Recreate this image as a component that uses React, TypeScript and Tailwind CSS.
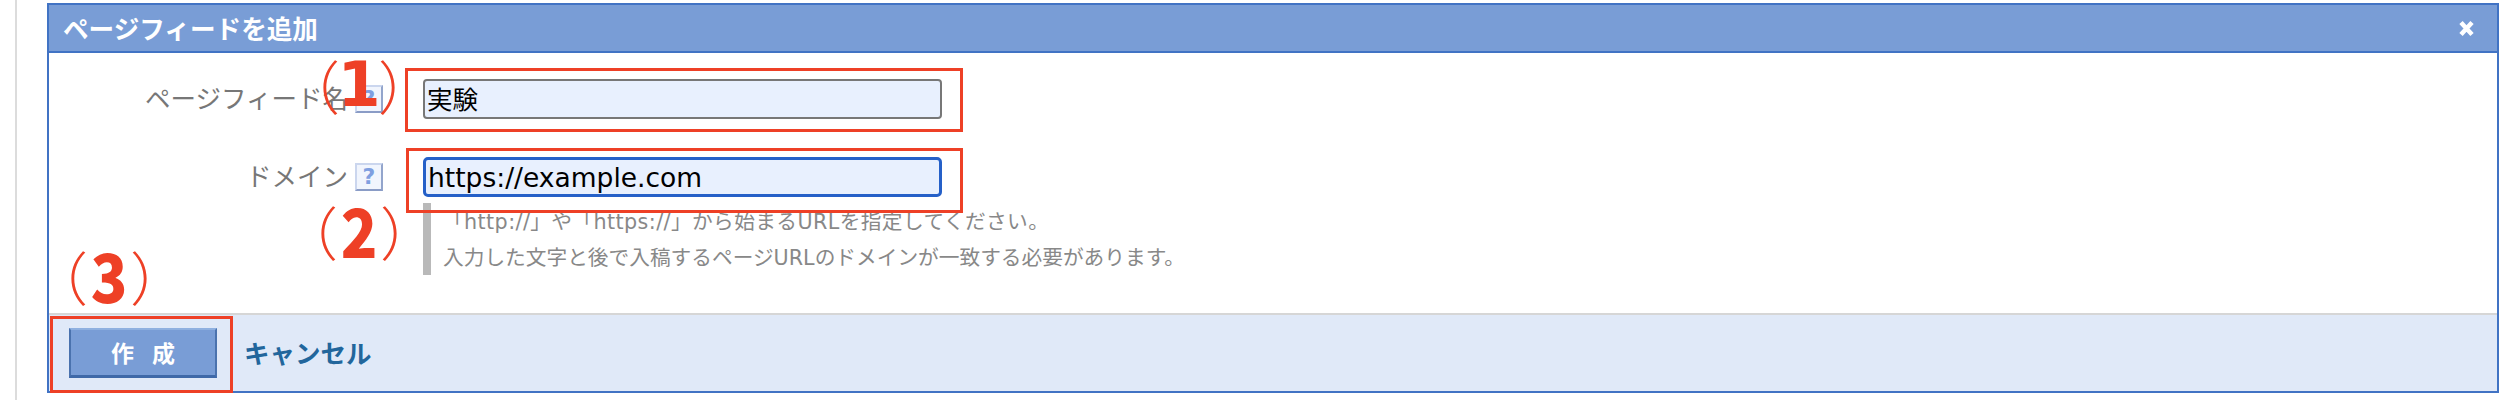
import { useState } from 'react';

const FONT = "font-['DejaVu_Sans','Noto_Sans_CJK_JP',sans-serif]";
const JP = "font-['Noto_Sans_CJK_JP',sans-serif]";

function HelpIcon() {
  return (
    <span className="flex h-[28px] w-[28px] items-center justify-center border-2 border-t-[#cbd6ee] border-l-[#cbd6ee] border-r-[#93a5cc] border-b-[#8a9cc6] bg-[#f1f5fd] font-['DejaVu_Sans',sans-serif] text-[22px] leading-none font-bold text-[#7f9fe0]">
      ?
    </span>
  );
}

function Callout({ n, className, digitClass }: { n: string; className: string; digitClass: string }) {
  return (
    <div className={`absolute flex h-[56px] items-center justify-between text-[#ee4026] ${className}`}>
      <span className={`${JP} h-[58px] text-[58px] leading-[58px] font-light`}>（</span>
      <span className={`absolute left-0 right-0 text-center leading-none ${digitClass}`}>{n}</span>
      <span className={`${JP} h-[58px] text-[58px] leading-[58px] font-light`}>）</span>
    </div>
  );
}

export default function App() {
  const [name, setName] = useState('実験');
  const [domain, setDomain] = useState('https://example.com');

  return (
    <div className={`relative h-[400px] w-[2517px] overflow-hidden bg-white ${FONT}`}>
      <div className="ml-[15px] h-full border-l-[2px] border-[#dcdcdc] pt-[3px] pl-[30px]">
        <div className="flex h-[390px] w-[2452px] flex-col border-2 border-[#4173c4]">
          {/* Header */}
          <div className="flex h-[48px] shrink-0 items-center justify-between border-b-2 border-[#4173c4] bg-[#799dd6] pr-[22px] pl-[14px]">
            <h2 className={`${JP} text-[25.6px] leading-none font-bold text-white`}>ページフィードを追加</h2>
            <svg width="17" height="17" viewBox="0 0 17 17" className="text-white">
              <path d="M3 2.5 L14 14.5 M14 2.5 L3 14.5" stroke="currentColor" strokeWidth="4.5" fill="none" />
            </svg>
          </div>

          {/* Form */}
          <div className="h-[260px] shrink-0 bg-white pt-[26px]">
            <div className="flex items-center">
              <div className="flex w-[334px] items-center justify-end gap-[7px]">
                <span className={`${JP} -translate-y-[2px] text-[25.5px] leading-none text-[#777]`}>ページフィード名</span>
                <HelpIcon />
              </div>
              <input
                value={name}
                onChange={(e) => setName(e.target.value)}
                className={`${JP} ml-[40px] h-[40px] w-[519px] rounded-[4px] border-2 border-[#777] bg-[#e8f0fe] pr-[3px] pb-[3px] pl-[2px] text-[25.5px] leading-none text-black outline-none`}
              />
            </div>
            <div className="mt-[38px] flex items-center">
              <div className="flex w-[334px] items-center justify-end gap-[7px]">
                <span className={`${JP} -translate-y-[2px] text-[25.5px] leading-none text-[#777]`}>ドメイン</span>
                <HelpIcon />
              </div>
              <input
                value={domain}
                onChange={(e) => setDomain(e.target.value)}
                className="ml-[40px] h-[40px] w-[519px] rounded-[5px] border-[3px] border-[#2560c8] bg-[#e8f0fe] px-[2px] text-[26.5px] text-black outline-none"
              />
            </div>
            <div className="mt-[6px] ml-[374px] flex h-[72px] flex-col gap-[6px] border-l-[8px] border-[#b9b9b9] pt-[4px] pl-[12px] text-[20.7px] leading-[30px] text-[#888]">
              <p className="tracking-[0.4px]">「http://」や「https://」から始まるURLを指定してください。</p>
              <p>入力した文字と後で入稿するページURLのドメインが一致する必要があります。</p>
            </div>
          </div>

          {/* Footer */}
          <div className="flex flex-1 items-center border-t-2 border-[#d6d6d6] bg-[#e0e9f8] pl-[20px]">
            <button className={`${JP} flex h-[50px] w-[148px] items-center justify-center gap-[18px] border-2 border-t-[#8fb0e0] border-r-[#4a72ae] border-b-[3px] border-b-[#3f69a8] border-l-[#4a72ae] bg-[#799dd6] text-[23px] leading-none font-bold text-white`}>
              <span>作</span>
              <span>成</span>
            </button>
            <a className={`${JP} ml-[27px] -translate-y-[1px] text-[25.5px] leading-none font-bold text-[#22669c]`}>キャンセル</a>
          </div>
        </div>
      </div>

      {/* Red annotations over the form */}
      <div className="absolute top-[68px] left-[405px] h-[64px] w-[558px] border-[3px] border-[#ee4026]" />
      <div className="absolute top-[148px] left-[406px] h-[65px] w-[557px] border-[3px] border-[#ee4026]" />
      <div className="absolute top-[316px] left-[50px] h-[77px] w-[183px] border-[3px] border-[#ee4026]" />
      <Callout n="1" className="top-[57px] left-[282px] w-[154px]" digitClass="font-['DejaVu_Sans',sans-serif] text-[62px] font-bold" />
      <Callout n="2" className="top-[203px] left-[280px] w-[158px]" digitClass={`${JP} -translate-y-[3px] scale-x-90 text-[67px] font-black`} />
      <Callout n="3" className="top-[248px] left-[30px] w-[158px]" digitClass={`${JP} -translate-y-[3px] scale-x-90 text-[67px] font-black`} />
    </div>
  );
}
